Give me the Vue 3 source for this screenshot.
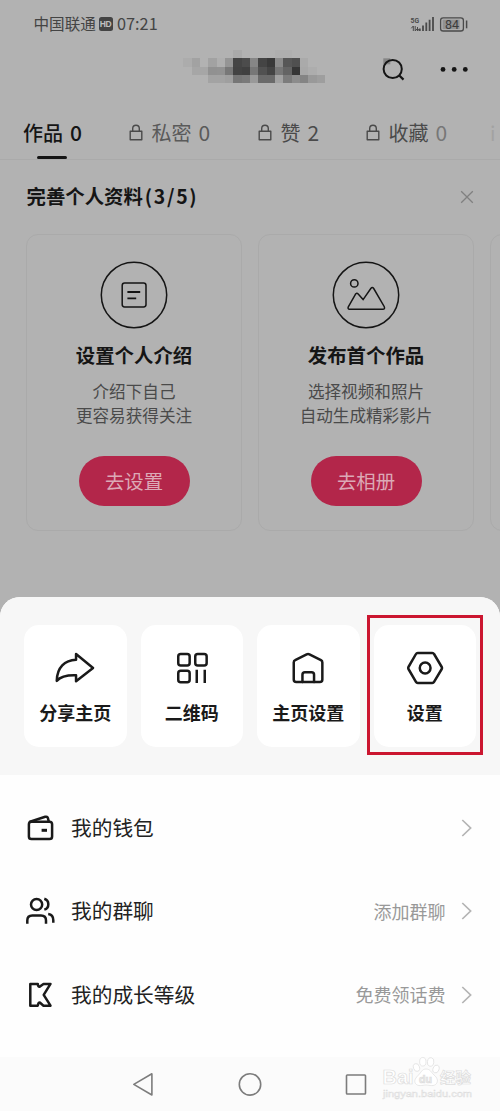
<script setup>
const mosaicRows = [
  { y: 50, cells: [[6, '#aaaaaa'], [11, '#afafaf'], [12, '#afafaf']] },
  { y: 58.3, cells: [[0, '#acacac'], [1, '#a2a2a2'], [3, '#a2a2a2'], [4, '#afafaf'], [5, '#959595'], [6, '#454545'], [7, '#4c4c4c'], [8, '#868686'], [9, '#444444'], [10, '#393939'], [11, '#8b8b8b'], [12, '#575757'], [13, '#505050'], [14, '#aaaaaa']] },
  { y: 66.6, cells: [[1, '#a6a6a6'], [2, '#a6a6a6'], [3, '#919191'], [4, '#929292'], [5, '#787878'], [6, '#434343'], [7, '#404040'], [8, '#777777'], [9, '#515151'], [10, '#444444'], [11, '#777777'], [12, '#646464'], [13, '#363636'], [14, '#a8a8a8'], [15, '#adadad']] },
  { y: 74.9, cells: [[3, '#a3a3a3'], [4, '#a3a3a3'], [5, '#9f9f9f'], [6, '#767676'], [7, '#7a7a7a'], [8, '#999999'], [9, '#6a6a6a'], [10, '#6a6a6a'], [11, '#a2a2a2'], [12, '#7c7c7c'], [13, '#8c8c8c'], [14, '#848484'], [15, '#999999'], [16, '#9e9e9e']] },
]
const tabs = [
  { label: '私密', count: '0', cls: 't2' },
  { label: '赞', count: '2', cls: 't3' },
  { label: '收藏', count: '0', cls: 't4' },
]
const cards = [
  { icon: 'intro', title: '设置个人介绍', lines: ['介绍下自己', '更容易获得关注'], action: '去设置' },
  { icon: 'photo', title: '发布首个作品', lines: ['选择视频和照片', '自动生成精彩影片'], action: '去相册' },
]
const tiles = [
  { icon: 'share', label: '分享主页' },
  { icon: 'qr', label: '二维码' },
  { icon: 'home', label: '主页设置' },
  { icon: 'settings', label: '设置' },
]
const rows = [
  { icon: 'wallet', label: '我的钱包', note: '' },
  { icon: 'group', label: '我的群聊', note: '添加群聊' },
  { icon: 'level', label: '我的成长等级', note: '免费领话费' },
]
</script>

<template>
  <div class="phone">
    <div class="profile">
      <div class="status">
        <span class="carrier">中国联通</span>
        <span class="hd">HD</span>
        <span class="clock">07:21</span>
        <svg class="signal" width="28" height="18" viewBox="410 15 28 18">
          <text x="410.6" y="23.2" class="fiveg" textLength="8.6" lengthAdjust="spacingAndGlyphs">5G</text>
          <path d="M413.3 31v-5l-2 2.3M415.2 26v5l2-2.3M417.5 27v4l1.5-2" fill="none" stroke="#4a4a4a" stroke-width="1" />
          <path d="M419.8 31v-2.6M423 31v-5.6M426.3 31v-8.6M429.6 31V19.7M433 31V17" stroke="#4a4a4a" stroke-width="1.8" />
        </svg>
        <svg class="battery" width="30" height="18" viewBox="439 15 30 18">
          <rect x="440.6" y="17.8" width="22.8" height="13.2" rx="2.6" fill="none" stroke="#4a4a4a" stroke-width="1.3" />
          <rect x="442.6" y="19.6" width="17" height="9.6" fill="#929292" />
          <path d="M466.6 20.5v7.8" stroke="#4a4a4a" stroke-width="1.5" />
          <text x="452" y="28.8" text-anchor="middle" class="charge">84</text>
        </svg>
      </div>

      <div class="topbar">
        <svg width="500" height="48" viewBox="0 48 500 48">
          <g v-for="r in mosaicRows" :key="r.y" shape-rendering="crispEdges">
            <rect v-for="c in r.cells" :key="c[0]" :x="183.33 + c[0] * 8.333" :y="r.y" width="8.4" height="8.4" :fill="c[1]" />
          </g>
          <rect x="383.3" y="58.3" width="7" height="6" fill="#868686" />
          <circle cx="392.7" cy="69" r="9.1" fill="none" stroke="#151515" stroke-width="2" />
          <path d="M399 75.2l4.5 4.4" stroke="#151515" stroke-width="2.2" />
          <g fill="#151515">
            <circle cx="443" cy="69.4" r="2.4" /><circle cx="454.2" cy="69.4" r="2.4" /><circle cx="465.3" cy="69.4" r="2.4" />
          </g>
        </svg>
      </div>

      <div class="tabs">
        <div class="tab active"><span>作品</span><b>0</b></div>
        <div v-for="t in tabs" :key="t.label" class="tab" :class="t.cls">
          <svg width="14" height="18" viewBox="0 0 14 18">
            <path d="M1.2 7.2h11.6v8.6H1.2zM3.7 7V4.6a3.3 3.3 0 0 1 6.6 0V7" fill="none" stroke="currentColor" stroke-width="1.4" stroke-linejoin="round" />
          </svg>
          <span>{{ t.label }}</span><b>{{ t.count }}</b>
        </div>
        <div class="tab cut"><span>i</span></div>
      </div>

      <div class="guide">
        <h2>完善个人资料<span>(3/5)</span></h2>
        <svg width="14" height="14" viewBox="0 0 14 14"><path d="M1.2 1.2l11.6 11.6M12.8 1.2L1.2 12.8" stroke="#808080" stroke-width="1.3" /></svg>
      </div>

      <div class="cards">
        <div v-for="c in cards" :key="c.title" class="card">
          <svg v-if="c.icon === 'intro'" width="68" height="68" viewBox="100.3 260.7 68 68" class="line">
            <circle cx="134.3" cy="294.7" r="32.7" stroke-width="1.5" />
            <rect x="122.5" y="282.8" width="23.8" height="23.8" rx="2.4" stroke-width="1.5" />
            <path d="M127.7 291.7h12.8M127.7 298h8.8" stroke-width="1.8" />
          </svg>
          <svg v-else width="68" height="68" viewBox="332.3 260.7 68 68" class="line">
            <circle cx="366.3" cy="294.7" r="32.7" stroke-width="1.5" />
            <circle cx="354.6" cy="283.1" r="3.7" stroke-width="1.5" />
            <path d="M348.6 306.6L355.7 294q1.3-1.8 2.8-.3l4.9 5.6 7.7-11.1q1.5-1.8 2.9 0l10.6 18.2q.9 2.4-1.5 2.5H350q-2.3-.2-1.4-2.3z" stroke-width="1.5" />
          </svg>
          <h3>{{ c.title }}</h3>
          <p v-for="l in c.lines" :key="l">{{ l }}</p>
          <div class="action">{{ c.action }}</div>
        </div>
        <div class="card"></div>
      </div>
    </div>

    <div class="sheet">
      <div class="tiles">
        <div v-for="t in tiles" :key="t.label" class="tile">
          <svg v-if="t.icon === 'share'" width="44" height="40" viewBox="53.25 648 44 40" class="bold">
            <path d="M57 680.8C57.3 667.5 65 660.2 76.3 659.8V654L93.3 668 76.3 681.3V675.3C67 675 61 676.3 57 680.8z" />
          </svg>
          <svg v-else-if="t.icon === 'qr'" width="44" height="40" viewBox="169.75 648 44 40" class="bold">
            <rect x="178" y="654" width="11.4" height="11.4" rx="2.5" />
            <rect x="195" y="654" width="11.4" height="11.4" rx="2.5" />
            <rect x="178" y="670.8" width="11.4" height="11.4" rx="2.5" />
            <path d="M196.5 669.8v13.2M204.5 669.8v13.2" stroke-linecap="butt" />
          </svg>
          <svg v-else-if="t.icon === 'home'" width="44" height="40" viewBox="286.25 648 44 40" class="bold">
            <path d="M294 662.4q0-1.6 1.4-2.2l11.5-5.8q1.4-.7 2.8 0l11.5 5.8q1.4.7 1.4 2.2V679.5q0 2.5-2.5 2.5H296.5q-2.5 0-2.5-2.5z" />
            <path d="M302.7 682v-7.3q0-2.5 2.5-2.5h6.6q2.5 0 2.5 2.5V682" />
          </svg>
          <svg v-else width="44" height="40" viewBox="402.75 648 44 40" class="bold">
            <path d="M408.2 669q-.6-1 0-2L415.7 654q.6-1.1 1.8-1.1h14.5q1.2 0 1.8 1.1L441.5 667q.6 1 0 2L433.8 681.9q-.6 1.1-1.8 1.1h-14.5q-1.2 0-1.8-1.1z" />
            <circle cx="424.9" cy="668" r="5.4" />
          </svg>
          <span>{{ t.label }}</span>
        </div>
        <div class="highlight"></div>
      </div>

      <div class="list">
        <div v-for="r in rows" :key="r.label" class="row">
          <svg v-if="r.icon === 'wallet'" width="32" height="32" viewBox="24 812 32 32" class="bold">
            <rect x="28.9" y="821.7" width="23.2" height="17.3" rx="2.6" />
            <path d="M30 821.7L45.2 816.8q2.2-.6 2.7 1.3l.9 3.5" />
            <path d="M41.6 830.3h5.4" stroke-width="3" stroke-linecap="butt" />
          </svg>
          <svg v-else-if="r.icon === 'group'" width="32" height="32" viewBox="24 895.2 32 32" class="bold butt">
            <circle cx="36.6" cy="904.7" r="5.6" />
            <path d="M44.3 898.9A5.7 5.7 0 0 1 44.3 909.8" />
            <path d="M27.3 924v-3.3q0-5 5-5h8.7q5 0 5 5V924M48.2 914.2q5.1.6 5.1 6.300V923" />
          </svg>
          <svg v-else width="32" height="32" viewBox="24 978.5 32 32" class="bold">
            <path d="M30.300 983.400H37.800Q38 986.300 39.600 986.200L43.500 983.400H50.500L43.700 994.300 50.500 1005.200H43.500L39.800 1002Q38.200 1002 37.800 1005.200H30.300z" />
          </svg>
          <span class="label">{{ r.label }}</span>
          <span class="note">{{ r.note }}</span>
          <svg width="12" height="18" viewBox="0 0 12 18"><path d="M1.3 1l8.3 8-8.3 8" fill="none" stroke="#b4b4b4" stroke-width="1.7" /></svg>
        </div>
      </div>
    </div>

    <div class="nav">
      <svg width="24" height="24" viewBox="131 1072 24 24"><path d="M133.8 1084.4L151.9 1073.8V1095z" stroke-linejoin="round" /></svg>
      <svg width="24" height="24" viewBox="238 1072 24 24"><circle cx="250" cy="1084.4" r="10.7" /></svg>
      <svg width="24" height="24" viewBox="345 1072 24 24"><rect x="346.5" y="1075" width="19" height="19" rx=".8" /></svg>
      <svg class="watermark" width="96" height="48" viewBox="380 1055 96 48">
        <g class="paw">
          <ellipse cx="416.500" cy="1067.500" rx="3" ry="4" transform="rotate(-20 416.500 1067.500)" />
          <ellipse cx="422.800" cy="1061.800" rx="3.200" ry="4.300" />
          <ellipse cx="430.600" cy="1062" rx="3.200" ry="4.300" transform="rotate(10 430.600 1062)" />
          <ellipse cx="436" cy="1069" rx="3" ry="4" transform="rotate(20 436 1069)" />
          <path d="M426 1069c4 0 5 3 8 6 3 2.500 4.500 5.500 2.500 8.500-2.500 3.500-7 1.500-10.500 1.500s-8 2-10.500-1.500c-2-3 .5-6 3-8.500 3-3 3.500-6 7.500-6z" />
        </g>
        <text x="382.5" y="1084.3" class="wm big" textLength="31" lengthAdjust="spacingAndGlyphs">Bai</text>
        <text x="419" y="1083" class="wm du" textLength="13" lengthAdjust="spacingAndGlyphs">du</text>
        <text x="440" y="1083" class="wm cn" textLength="31" lengthAdjust="spacingAndGlyphs">经验</text>
        <text x="383" y="1096.8" class="wm url" textLength="89" lengthAdjust="spacingAndGlyphs">jingyan.baidu.com</text>
      </svg>
    </div>
  </div>
</template>

<style>
body { margin: 0; }
</style>

<style scoped>
.phone {
  width: 500px; height: 1111px; overflow: hidden; background: #b2b2b2; color: #151515;
  font-family: "Noto Sans CJK SC", sans-serif; display: flex; flex-direction: column; position: relative;
}
svg { display: block; flex: none; }
.profile { height: 597px; flex: none; overflow: hidden; }
.status { height: 48px; display: flex; align-items: center; padding-left: 33.5px; color: #444; white-space: nowrap; }
.carrier { font-size: 15.6px; line-height: 46px; height: 48px; width: 65px; }
.hd {
  width: 14px; height: 14px; border-radius: 2.5px; background: #444; color: #c0c0c0;
  font: bold 8.5px/14px "Liberation Sans", sans-serif; text-align: center; letter-spacing: -.3px;
}
.clock { font-size: 16.3px; line-height: 46px; height: 48px; margin-left: 4.5px; width: 293px; }
.signal { margin-right: 1px; }
.fiveg { font: bold 8px Roboto, sans-serif; fill: #4a4a4a; }
.charge { font: 400 12.5px Roboto, sans-serif; fill: #3c3c3c; }
.topbar { height: 48px; }
.tabs {
  height: 64px; box-sizing: border-box; border-bottom: 1px solid #aaa; width: 500px;
  display: grid; grid-template-columns: 106px 129px 108px 124px 10px; padding-left: 23px;
}
.tab { display: flex; align-items: center; height: 74px; font-size: 20px; color: #4a4a4a; position: relative; white-space: nowrap; }
.tab svg { margin-right: 9px; margin-left: -.5px; color: #4a4a4a; }
.tab span { line-height: 74px; }
.tab b { font: 400 21px/72px "Noto Sans CJK SC", sans-serif; height: 74px; margin-left: 7px; }
.tab:not(.active) span { line-height: 74px; }
.t2 { color: #5a5a5a; }
.t4 b { color: #777; }
.tab.active { color: #151515; font-weight: 500; }
.tab.active span { line-height: 73px; height: 74px; }
.tab.active b { font-weight: 500; }
.tab.active::after { content: ""; position: absolute; left: 14px; top: 60px; width: 30px; height: 2.6px; border-radius: 2px; background: #151515; }
.cut { color: #a2a2a2; }
.guide { height: 73px; display: flex; justify-content: space-between; align-items: center; padding: 0 26px 0 26.5px; }
h2 { margin: 0; font-size: 19.4px; line-height: 72px; height: 73px; font-weight: 700; }
h2 span { letter-spacing: 1.7px; margin-left: 2px; }
.cards { display: flex; gap: 16px; padding-left: 26px; margin-top: 1px; }
.card {
  box-sizing: border-box; width: 216px; height: 297px; flex: none; border: 1px solid #aaa; border-radius: 12px;
  display: flex; flex-direction: column; align-items: center; padding-top: 26px;
}
.line { fill: none; stroke: #151515; }
h3 { margin: 11px 0 9px; font-size: 19.4px; line-height: 30px; font-weight: 700; white-space: nowrap; }
p { margin: 0; font-size: 16.6px; line-height: 24px; color: #4a4a4a; white-space: nowrap; }
.action { margin-top: 28.5px; width: 111px; height: 50px; line-height: 50px; border-radius: 25px; background: #b3264a; color: #dca9b6; font-size: 19.4px; text-align: center; }
.sheet { height: 460px; flex: none; background: #fefefe; border-radius: 20px 20px 0 0; overflow: hidden; }
.tiles { height: 178px; box-sizing: border-box; background: #f7f7f7; display: flex; gap: 14px; padding: 28px 0 0 24px; position: relative; }
.tile { width: 102.5px; height: 122px; border-radius: 15px; background: #fff; display: flex; flex-direction: column; align-items: center; padding-top: 23px; box-sizing: border-box; }
.tile span { margin-top: 10px; font-size: 18px; line-height: 28px; font-weight: 700; color: #1a1a1a; white-space: nowrap; }
.bold { fill: none; stroke: #1a1a1a; stroke-width: 2.5; stroke-linejoin: round; stroke-linecap: round; }
.butt { stroke-linecap: butt; }
.highlight { position: absolute; left: 367px; top: 18px; width: 116px; height: 140px; box-sizing: border-box; border: 3px solid #cb1630; }
.list { padding-top: 11.3px; }
.row { height: 83.3px; display: flex; align-items: center; padding: 0 27px 0 24px; }
.label { margin-left: 15px; font-size: 20.7px; line-height: 30px; padding-bottom: 2px; color: #222; white-space: nowrap; }
.note { margin-left: auto; margin-right: 15.5px; font-size: 18px; line-height: 28px; padding-bottom: 1px; color: #999; white-space: nowrap; }
.nav { height: 54px; flex: none; background: #fbfbfb; display: flex; align-items: center; padding-left: 131px; gap: 83px; position: relative; }
.nav > svg { fill: none; stroke: #7c7c7c; stroke-width: 1.6; }
.nav > .watermark { position: absolute; left: 380px; top: -2px; stroke: #dedede; stroke-width: .7; }
.paw { fill: #fff; }
.wm { fill: #fff; stroke: #dcdcdc; stroke-width: .7; font-family: "Liberation Sans", "Noto Sans CJK SC", sans-serif; font-weight: 700; }
.big { font-size: 20px; }
.du { font-size: 11px; fill: #eee; }
.cn { font-size: 15px; }
.url { font-size: 9.5px; font-weight: 400; stroke-width: .5; }
</style>
